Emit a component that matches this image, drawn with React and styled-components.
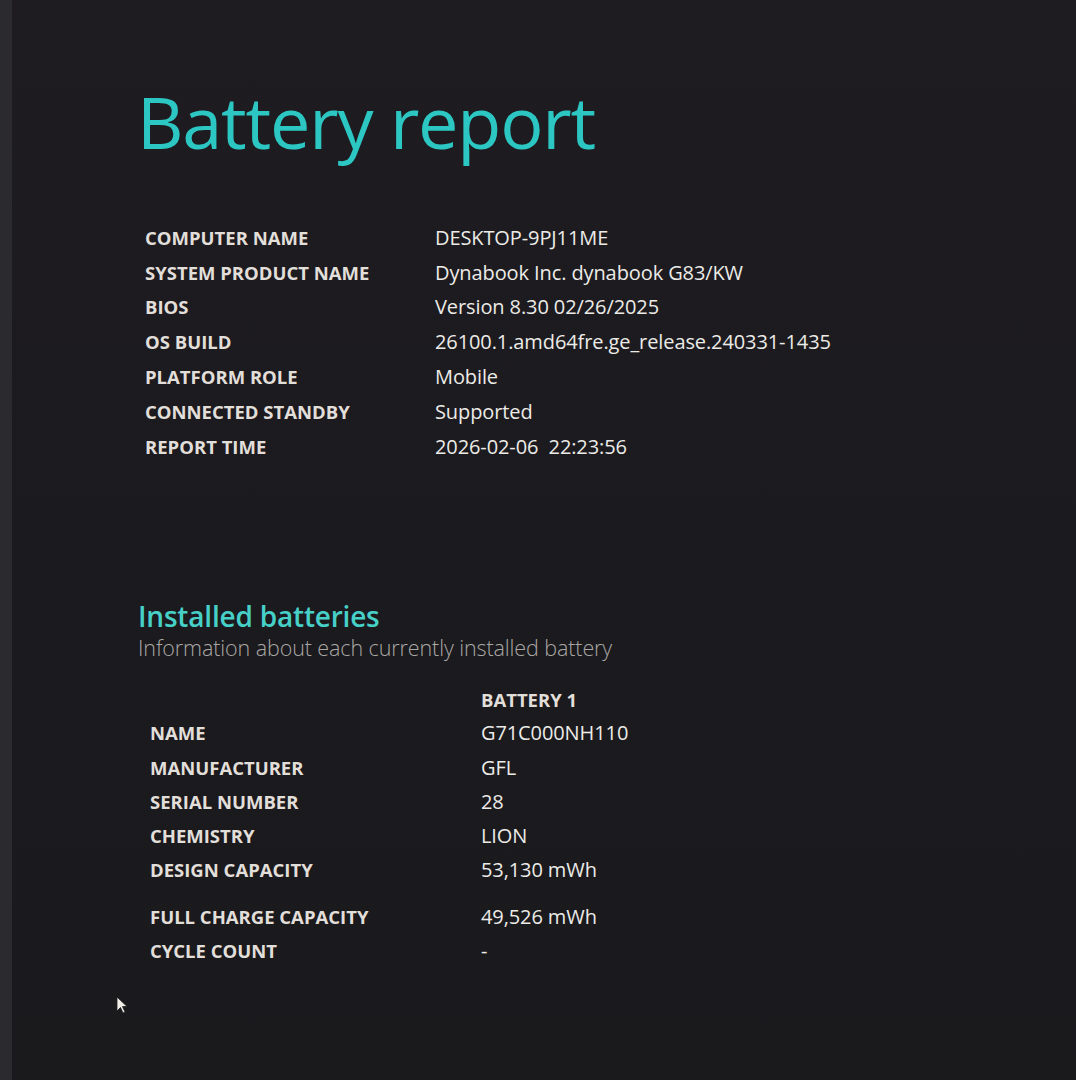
import React from 'react';
import styled, { createGlobalStyle } from 'styled-components';

const GlobalStyle = createGlobalStyle`
  html, body {
    margin: 0;
    padding: 0;
    background: #1b1a1e;
  }
  body {
    font-family: "Open Sans", "Noto Sans", sans-serif;
  }
`;

const Screen = styled.div`
  position: relative;
  width: 1076px;
  height: 1080px;
  overflow: hidden;
  background: linear-gradient(180deg, #1e1c20 0%, #1b1a1e 50%, #1a1a1d 100%);
  border-left: 12px solid #2b2a2e;
  box-sizing: border-box;
  display: flex;
  flex-direction: column;
  padding: 76px 0 0 125px;
`;

const Title = styled.h1`
  margin: 0;
  font-size: 72px;
  font-weight: 500;
  letter-spacing: -1.2px;
  line-height: 90px;
  color: #2cc7c3;
`;

const InfoTable = styled.div`
  display: flex;
  flex-direction: column;
  margin: ${p => p.$margin};
`;

const Row = styled.div`
  display: grid;
  grid-template-columns: ${p => p.$labelWidth}px auto;
  align-items: center;
  height: ${p => p.$h}px;
  margin-top: ${p => p.$gap || 0}px;
`;

const Label = styled.div`
  font-size: 18.5px;
  font-weight: 700;
  letter-spacing: 0;
  color: #e2dfda;
  text-transform: uppercase;
`;

const Value = styled.div`
  font-size: 20px;
  font-weight: 400;
  letter-spacing: -0.1px;
  color: #ecebe7;
`;

const Section = styled.div`
  display: flex;
  flex-direction: column;
  margin-top: 134px;
  padding-left: 1px;
`;

const SectionTitle = styled.h2`
  margin: 0;
  font-size: 28px;
  font-weight: 600;
  letter-spacing: -0.2px;
  line-height: 36px;
  color: #47d0c8;
`;

const SectionSub = styled.div`
  font-size: 21.5px;
  font-weight: 300;
  letter-spacing: -0.1px;
  color: #aaa8a5;
  line-height: 28px;
`;

const Cursor = styled.svg`
  position: absolute;
  left: 104px;
  top: 996px;
`;

const systemInfo = [
  ['Computer name', 'DESKTOP-9PJ11ME'],
  ['System product name', 'Dynabook Inc. dynabook G83/KW'],
  ['BIOS', 'Version 8.30 02/26/2025'],
  ['OS build', '26100.1.amd64fre.ge_release.240331-1435'],
  ['Platform role', 'Mobile'],
  ['Connected standby', 'Supported'],
  ['Report time', '2026-02-06\u00a0\u00a022:23:56'],
];

const batteryInfo = [
  ['Name', 'G71C000NH110'],
  ['Manufacturer', 'GFL'],
  ['Serial number', '28'],
  ['Chemistry', 'LION'],
  ['Design capacity', '53,130 mWh'],
  ['Full charge capacity', '49,526 mWh', 12],
  ['Cycle count', '-'],
];

export default function App() {
  return (
    <>
      <GlobalStyle />
      <Screen>
        <Title>Battery report</Title>
        <InfoTable $margin="54px 0 0 8px">
          {systemInfo.map(([k, v]) => (
            <Row key={k} $labelWidth={290} $h={34.8}>
              <Label>{k}</Label>
              <Value>{v}</Value>
            </Row>
          ))}
        </InfoTable>

        <Section>
          <SectionTitle>Installed batteries</SectionTitle>
          <SectionSub>Information about each currently installed battery</SectionSub>
          <InfoTable $margin="21px 0 0 12px">
            <Row $labelWidth={331} $h={33}>
              <div />
              <Label>Battery 1</Label>
            </Row>
            {batteryInfo.map(([k, v, gap]) => (
              <Row key={k} $labelWidth={331} $h={34.3} $gap={gap}>
                <Label>{k}</Label>
                <Value>{v}</Value>
              </Row>
            ))}
          </InfoTable>
        </Section>

        <Cursor width="14" height="20" viewBox="0 0 14 20">
          <path d="M1 1 L1 15 L4.5 11.5 L7 17 L9 16 L6.5 10.5 L11 10.5 Z" fill="#f2efe9" stroke="#222" strokeWidth="0.8" />
        </Cursor>
      </Screen>
    </>
  );
}
